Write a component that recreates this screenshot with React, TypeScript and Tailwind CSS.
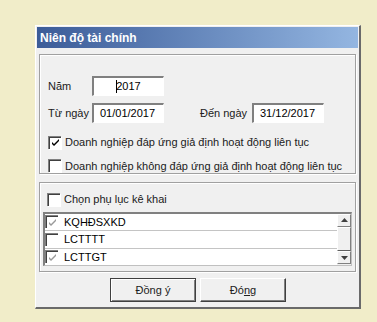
import type { ReactNode } from "react";

const font = { fontFamily: '"Liberation Sans", Arial, sans-serif' };

function Check({ color }: { color: string }) {
  return (
    <svg width="9" height="9" viewBox="0 0 9 9" className="block">
      <path d="M1 4 L3 6 L8 1 L8 3 L3 8 L1 6 Z" fill={color} />
    </svg>
  );
}

function CheckBox({ checked, muted }: { checked?: boolean; muted?: boolean }) {
  return (
    <span className="flex h-[13px] w-[13px] shrink-0 items-center justify-center border-t border-l border-[#808080] bg-white shadow-[inset_1px_1px_0_#404040,1px_1px_0_#ffffff]">
      {checked ? <Check color={muted ? "#9a9a9a" : "#000000"} /> : null}
    </span>
  );
}

function Field({ value, center, cursor }: { value: string; center?: boolean; cursor?: boolean }) {
  return (
    <div
      className={`flex h-[20px] w-[72px] shrink-0 items-center border-t-2 border-l-2 border-t-[#808080] border-l-[#808080] border-r border-b border-r-white border-b-white bg-white text-[11px] text-black ${center ? "justify-center" : "pl-[6px]"}`}
    >
      {cursor ? <span className="mr-[-1px] h-[13px] w-px bg-black" /> : null}
      {value}
    </div>
  );
}

function Group({ className, children }: { className: string; children: ReactNode }) {
  return (
    <div
      className={`border border-[#a0a0a0] shadow-[inset_1px_1px_0_#ffffff,1px_1px_0_#ffffff] ${className}`}
    >
      {children}
    </div>
  );
}

function Row({ label, checked, last }: { label: string; checked?: boolean; last?: boolean }) {
  return (
    <div className={`flex h-[18px] items-center gap-[6px] ${last ? "" : "border-b border-[#c4c4c4]"}`}>
      <CheckBox checked={checked} muted />
      <span className="text-[11px] text-black">{label}</span>
    </div>
  );
}

function Button({ children, primary }: { children: ReactNode; primary?: boolean }) {
  return (
    <button
      type="button"
      className={`flex h-[24px] w-[86px] items-center justify-center bg-[#f0f0f0] text-[11px] font-normal text-[#202020] ${primary ? "border border-[#404040] shadow-[inset_1px_1px_0_#ffffff,inset_-1px_-1px_0_#808080]" : "border border-t-white border-l-white border-r-[#404040] border-b-[#404040] shadow-[inset_-1px_-1px_0_#808080]"}`}
    >
      {children}
    </button>
  );
}

export default function App() {
  return (
    <div className="h-[322px] w-[377px] overflow-hidden bg-[#f1edc9] pl-[35px] pt-[25px]" style={font}>
      <div className="flex h-[284px] w-[326px] flex-col border-t border-l border-white border-r-2 border-b-2 border-r-[#6a6a6a] border-b-[#6a6a6a] bg-[#f0f0f0] p-px">
        <div className="flex h-[21px] items-center bg-gradient-to-r from-[#3c5c98] to-[#94b6e1] pl-[3px] text-[12px] font-bold text-white">
          Niên độ tài chính
        </div>

        <div className="flex flex-col px-[2px] pt-[6px]">
          <Group className="flex h-[120px] flex-col pl-[8px] pt-[21px]">
            <div className="flex items-center">
              <span className="w-[44px] text-[11px] text-[#202020]">Năm</span>
              <Field value="2017" center cursor />
            </div>
            <div className="mt-[7px] flex items-center">
              <span className="w-[44px] whitespace-nowrap text-[11px] text-[#202020]">Từ ngày</span>
              <Field value="01/01/2017" />
              <span className="ml-[36px] w-[52px] whitespace-nowrap text-[11px] text-[#202020]">Đến ngày</span>
              <Field value="31/12/2017" />
            </div>
            <div className="mt-[11px] flex items-center gap-[4px]">
              <CheckBox checked />
              <span className="whitespace-nowrap text-[11px] text-[#202020]">Doanh nghiệp đáp ứng giả định hoạt động liên tục</span>
            </div>
            <div className="mt-[7px] flex items-center gap-[4px]">
              <CheckBox />
              <span className="whitespace-nowrap text-[11px] text-[#202020]">Doanh nghiệp không đáp ứng giả định hoạt động liên tục</span>
            </div>
          </Group>

          <Group className="mt-[8px] flex h-[90px] flex-col px-[3px] pt-[8px]">
            <div className="flex items-center gap-[4px] pl-[4px]">
              <CheckBox />
              <span className="text-[11px] text-[#202020]">Chọn phụ lục kê khai</span>
            </div>
            <div className="mt-[4px] flex h-[54px] border-t-2 border-l-2 border-t-[#808080] border-l-[#808080] border-r border-b border-r-[#c0c0c0] border-b-[#c0c0c0] bg-white">
              <div className="flex flex-1 flex-col">
                <Row label="KQHĐSXKD" checked />
                <Row label="LCTTTT" />
                <Row label="LCTTGT" checked last />
              </div>
              <div className="flex w-[14px] flex-col bg-[#f0f0f0]">
                <div className="flex h-[14px] items-center justify-center border border-t-white border-l-white border-r-[#808080] border-b-[#808080]">
                  <svg width="7" height="4" viewBox="0 0 7 4"><path d="M3.5 0 L7 4 L0 4 Z" fill="#404040" /></svg>
                </div>
                <div className="h-[24px] border border-t-white border-l-white border-r-[#808080] border-b-[#606060]" />
                <div className="flex-1" />
                <div className="flex h-[14px] items-center justify-center border border-t-white border-l-white border-r-[#808080] border-b-[#808080]">
                  <svg width="7" height="4" viewBox="0 0 7 4"><path d="M0 0 L7 0 L3.5 4 Z" fill="#404040" /></svg>
                </div>
              </div>
            </div>
          </Group>

          <div className="mt-[6px] flex justify-center gap-[4px] pl-[1px]">
            <Button primary>
              <span>Đồn<span className="underline">g</span> ý</span>
            </Button>
            <Button>
              <span>Đó<span className="underline">n</span>g</span>
            </Button>
          </div>
        </div>
      </div>
    </div>
  );
}
